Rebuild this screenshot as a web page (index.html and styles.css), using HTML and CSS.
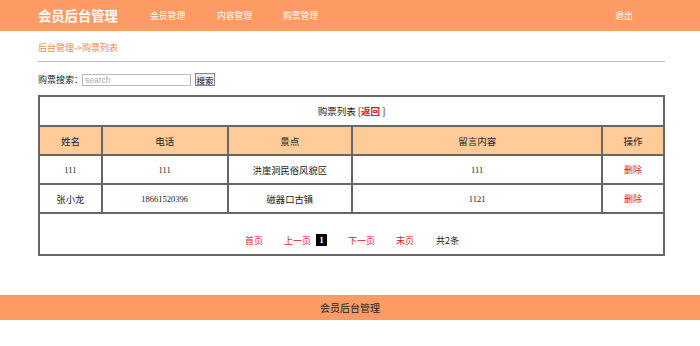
FILE: index.html
```html
<!DOCTYPE html>
<html lang="zh-CN">
<head>
<meta charset="utf-8">
<title>会员后台管理</title>
<link rel="stylesheet" href="styles.css">
</head>
<body>
<header class="topbar">
  <div class="brand">会员后台管理</div>
  <nav class="nav">
    <a class="nav-item n1" href="#">会员管理</a>
    <a class="nav-item n2" href="#">内容管理</a>
    <a class="nav-item n3" href="#">购票管理</a>
  </nav>
  <a class="logout" href="#">退出</a>
</header>
<main class="wrap">
  <div class="crumb">后台管理-&gt;购票列表</div>
  <div class="search">
    <span class="label">购票搜索：</span>
    <input class="search-input" type="text" placeholder="search">
    <button class="search-btn" type="button">搜索</button>
  </div>
  <table class="list">
    <tr class="cap-row"><td colspan="5">购票列表 [<a class="back" href="#">返回</a> ]</td></tr>
    <tr class="head-row">
      <th class="c1">姓名</th><th class="c2">电话</th><th class="c3">景点</th><th class="c4">留言内容</th><th class="c5">操作</th>
    </tr>
    <tr class="data-row">
      <td>111</td><td>111</td><td class="cjk">洪崖洞民俗风貌区</td><td>111</td><td><a class="del" href="#">删除</a></td>
    </tr>
    <tr class="data-row">
      <td class="cjk">张小龙</td><td>18661520396</td><td class="cjk">磁器口古镇</td><td>1121</td><td><a class="del" href="#">删除</a></td>
    </tr>
    <tr class="page-row">
      <td colspan="5">
        <div class="pager">
          <a class="pg p-first" href="#">首页</a>
          <a class="pg p-prev" href="#">上一页</a>
          <span class="cur">1</span>
          <a class="pg p-next" href="#">下一页</a>
          <a class="pg p-last" href="#">末页</a>
          <span class="total">共2条</span>
        </div>
      </td>
    </tr>
  </table>
</main>
<footer class="footer">会员后台管理</footer>
</body>
</html>
```
FILE: styles.css
```css
* { box-sizing: border-box; }
html, body { margin: 0; padding: 0; background: #fff; }
body {
  font-family: "Liberation Sans", "Noto Sans CJK SC", sans-serif;
  font-size: 10px;
  color: #222;
  width: 700px;
  height: 346px;
  overflow: hidden;
}
a { text-decoration: none; }

.topbar {
  height: 31px;
  background: #fe9a63;
  display: flex;
  align-items: center;
  padding-left: 38px;
  color: #fff;
}
.brand {
  font-family: "Noto Sans CJK SC", sans-serif;
  font-weight: bold;
  font-size: 13.3px;
  width: 112px;
  flex-shrink: 0;
}
.nav { display: flex; }
.nav-item {
  color: #fff;
  font-family: "Noto Sans CJK SC", sans-serif;
  font-size: 8.8px;
  flex-shrink: 0;
}
.n1 { width: 67px; }
.n2 { width: 66px; }
.n3 { width: 50px; }
.logout {
  color: #fff;
  font-family: "Noto Sans CJK SC", sans-serif;
  font-size: 9px;
  margin-left: 282px;
}

.wrap {
  margin: 0 35px 0 38px;
}
.crumb {
  height: 31px;
  padding-top: 10px;
  color: #f08850;
  font-family: "Noto Sans CJK SC", sans-serif;
  font-size: 9px;
  border-bottom: 1px solid #bdbdbd;
}
.search {
  display: flex;
  align-items: center;
  height: 33px;
  padding-top: 2px;
}
.label {
  font-family: "Noto Sans CJK SC", sans-serif;
  font-size: 9px;
  width: 44px;
  flex-shrink: 0;
  white-space: nowrap;
}
.search-input {
  width: 109px;
  height: 12px;
  border: 1px solid #bbb;
  padding: 0 2px;
  font-size: 8.5px;
  font-family: "Liberation Sans", sans-serif;
  color: #aaa;
  flex-shrink: 0;
}
.search-input::placeholder { color: #aaa; }
.search-btn {
  margin-left: 4px;
  width: 20px;
  height: 13px;
  padding: 0;
  border: 1px solid #888;
  background: #eee;
  font-family: "Noto Sans CJK SC", sans-serif;
  font-size: 8.5px;
  line-height: 10px;
  color: #111;
  flex-shrink: 0;
}

.list {
  width: 627px;
  border-collapse: collapse;
  border: 2px solid #666;
}
.list td, .list th {
  border: 2px solid #666;
  text-align: center;
  padding: 0;
  font-weight: normal;
  color: #222;
}
.cap-row td {
  height: 30px;
  font-family: "Noto Sans CJK SC", sans-serif;
  font-size: 9.5px;
}
.back { color: #d42020; font-weight: bold; }
.head-row th {
  height: 29px;
  background: #ffcc99;
  font-family: "Noto Sans CJK SC", sans-serif;
  font-size: 9.5px;
}
.head-row th + th { border-left-color: #55688a; }
.c1 { width: 63px; }
.c2 { width: 126px; }
.c3 { width: 125px; }
.c4 { width: 251px; }
.c5 { width: 62px; }
.data-row td {
  height: 29px;
  font-size: 8.5px;
  font-family: "Liberation Serif", "Noto Sans CJK SC", serif;
}
.data-row td.cjk {
  font-family: "Noto Sans CJK SC", sans-serif;
  font-size: 9.3px;
}
.del {
  color: #d42020;
  font-family: "Noto Sans CJK SC", sans-serif;
  font-size: 9px;
}
.page-row td { height: 42px; text-align: left; }
.pager {
  display: flex;
  align-items: center;
  padding-left: 205px;
  padding-top: 12px;
  font-family: "Noto Sans CJK SC", sans-serif;
  font-size: 9px;
  white-space: nowrap;
}
.pager > * { flex-shrink: 0; }
.pg { color: #d42020; }
.p-first { margin-right: 21px; }
.p-prev { margin-right: 5px; }
.cur {
  display: inline-block;
  width: 11px;
  height: 12px;
  background: #000;
  color: #fff;
  text-align: center;
  line-height: 12px;
  font-family: "Liberation Serif", serif;
  font-weight: bold;
  margin-right: 21px;
}
.p-next { margin-right: 21px; }
.p-last { margin-right: 22px; }
.total { color: #222; }

.footer {
  margin-top: 39px;
  height: 25px;
  background: #fe9a63;
  display: flex;
  align-items: center;
  justify-content: center;
  font-family: "Noto Sans CJK SC", sans-serif;
  font-size: 10px;
  color: #222;
}
```
